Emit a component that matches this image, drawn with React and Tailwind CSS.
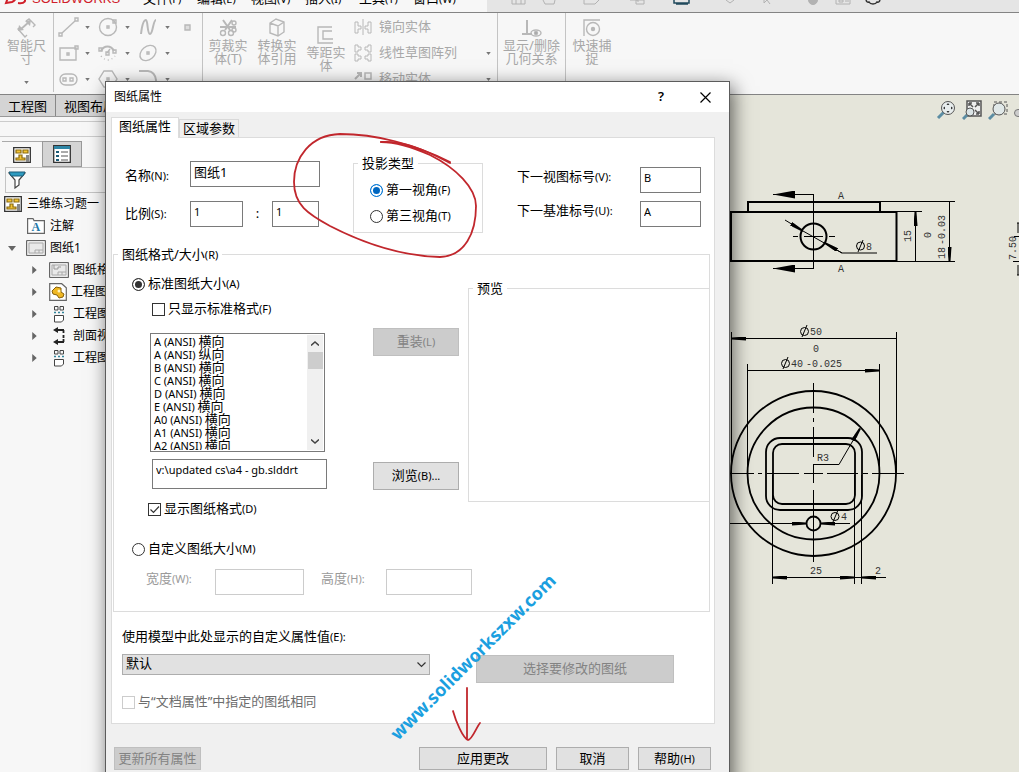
import React, { useState } from 'react';

const MENUS = [
  { text: '文件(F)' },
  { text: '编辑(E)' },
  { text: '视图(V)' },
  { text: '插入(I)' },
  { text: '工具(T)' },
  { text: '窗口(W)' },
];

const FORMATS = [
  'A (ANSI) 横向',
  'A (ANSI) 纵向',
  'B (ANSI) 横向',
  'C (ANSI) 横向',
  'D (ANSI) 横向',
  'E (ANSI) 横向',
  'A0 (ANSI) 横向',
  'A1 (ANSI) 横向',
  'A2 (ANSI) 横向',
];

// small helpers

function Key({ children }) {
  return <span className="text-[11px]">{children}</span>;
}

function Caret({ className = '' }) {
  return (
    <svg className={`h-[3px] w-[5px] shrink-0 ${className}`} viewBox="0 0 6 4">
      <path d="M0 0h6L3 4z" fill="#777" />
    </svg>
  );
}

function Radio({ label, hot, blue, ...props }) {
  return (
    <label className="flex items-center gap-[3px]">
      <input
        type="radio"
        className={`size-[13px] appearance-none rounded-full border bg-white checked:shadow-[inset_0_0_0_2px_white] ${
          blue
            ? 'border-[#333] checked:border-[#0078d7] checked:bg-[#0067c0]'
            : 'border-[#333] checked:bg-[#333]'
        }`}
        {...props}
      />
      <span>
        {label}
        <Key>{hot}</Key>
      </span>
    </label>
  );
}

function Checkbox({ label, hot, disabled, ...props }) {
  return (
    <label className={`flex items-center gap-[3px] ${disabled ? 'text-[#6d6d6d]' : ''}`}>
      <span className="relative flex">
        <input
          type="checkbox"
          disabled={disabled}
          className="peer size-[13px] appearance-none border border-[#333] bg-white disabled:border-[#ccc]"
          {...props}
        />
        <svg
          className="pointer-events-none absolute inset-0 hidden size-[13px] peer-checked:block"
          viewBox="0 0 13 13"
        >
          <path d="M2.5 6.5l3 3 5.500-6" fill="none" stroke="#333" strokeWidth="1.2" />
        </svg>
      </span>
      <span>
        {label}
        {hot && <Key>{hot}</Key>}
      </span>
    </label>
  );
}

function TextBox({ className = '', ...props }) {
  return (
    <input
      type="text"
      className={`border border-[#7a7a7a] bg-white px-[3px] pb-[6px] text-[11px] outline-none disabled:border-[#ccc] ${className}`}
      {...props}
    />
  );
}

function Button({ className = '', children, ...props }) {
  return (
    <button
      type="button"
      className={`border border-[#adadad] bg-[#e1e1e1] disabled:border-[#bfbfbf] disabled:bg-[#ccc] disabled:text-[#838383] ${className}`}
      {...props}
    >
      {children}
    </button>
  );
}

// top of the main window

function MenuBar() {
  return (
    <header className="flex h-[13px] overflow-hidden border-b border-[#848484] bg-[#e5e5e5]">
      <div className="flex h-3 w-[487px] items-end bg-[#f7f7f7] pb-[5px] leading-4">
        <svg className="mb-[2px] ml-1 h-4 w-7 shrink-0" viewBox="0 0 28 16">
          <path d="M2 14l4-11h4c4 0 3 8-2 10zM14 14c7 1 9-3 5-5s-2-5 4-4" fill="none" stroke="#d0202a" strokeWidth="2" />
        </svg>
        <span className="w-[111px] font-['Liberation_Sans'] text-[13px] text-[#d0202a]">SOLIDWORKS</span>
        <nav className="flex gap-[10px] whitespace-nowrap">
          {MENUS.map((m) => (
            <a key={m.text} href="#" className="w-11">
              {m.text.slice(0, 2)}
              <Key>{m.text.slice(2)}</Key>
            </a>
          ))}
        </nav>
      </div>
      <svg className="h-3 w-[400px]" viewBox="487 0 400 12" fill="none" stroke="#b2b2b2">
        <path d="M512 0v4h13V0M516 0v4M521 0v4M543 0l2 4h9l1-4M584 0v4h11l4-4M630 0h8v2M636 0h8v4h-8zM836 0v4h14V0M839 0h4v2h-4zM845 1h4" />
        <path d="M674 0v3h15V0M676 4h12" stroke="#20495c" strokeWidth="1.500" />
        <path d="M726 0l4 3 4-3M764 0v3l3-3 3 4" />
        <circle cx="813" cy="0" r="4.500" fill="#b2b2b2" />
        <path d="M866 0q1 3 3 2 1 2 4 2 3 0 4-2 2 1 3-2" stroke="#333" strokeWidth="1.500" />
      </svg>
    </header>
  );
}

function BigTool({ lines, className = '', children }) {
  return (
    <button type="button" disabled className={`flex flex-col items-center leading-[13px] ${className}`}>
      <svg className="mb-px size-5" viewBox="0 0 20 20" fill="none" stroke="#b8b8b8" strokeWidth="1.400">
        {children}
      </svg>
      {lines.map((l) => (
        <span key={l} className="whitespace-nowrap">{l}</span>
      ))}
      <Caret className="mt-auto" />
    </button>
  );
}

function SmallTool({ children, caret = true }) {
  return (
    <button type="button" disabled className="flex h-[26px] w-10 items-center gap-[5px]">
      <svg className="h-5 w-[22px]" viewBox="0 0 22 20" fill="none" stroke="#b8b8b8" strokeWidth="1.400">
        {children}
      </svg>
      {caret && <Caret />}
    </button>
  );
}

function RowTool({ label, caret, children }) {
  return (
    <button type="button" disabled className="flex h-[26px] items-center">
      <svg className="mr-[7px] h-[18px] w-[18px]" viewBox="0 0 18 18" fill="none" stroke="#b8b8b8">
        {children}
      </svg>
      {label}
      {caret && <Caret className="ml-auto" />}
    </button>
  );
}

function Ribbon() {
  return (
    <div className="flex h-[82px] items-start overflow-hidden border-b border-[#848484] bg-[#f7f7f7] text-[#a8a8a8]">
      <BigTool lines={['智能尺', '寸']} className="h-[79px] w-[53px] pt-[5px] pb-2">
        <path d="M9 3l3-2 6 6-2 2M2 10l-1 1 7 8 2-2" />
        <path d="M4 11l8-7" strokeWidth="1.800" />
        <path d="M1 13l1-6 5 5zM14 2l-1 6-5-5z" fill="#b8b8b8" stroke="none" />
      </BigTool>
      <div className="grid h-[79px] w-[149px] grid-cols-[40px_40px_40px_20px] border-l border-[#c4c4c4] pt-px pl-1">
        <SmallTool>
          <path d="M4 16L17 4" />
          <path d="M1 16h3v3H1zM17 1h3v3h-3z" />
        </SmallTool>
        <SmallTool>
          <circle cx="10" cy="10" r="8.500" />
          <path d="M9 9h2v2H9zM15 3h3v3h-3z" />
        </SmallTool>
        <SmallTool>
          <path d="M3 17C4 8 6 3 8 3s1 14 4 14 3-14 6-14" strokeWidth="2" />
        </SmallTool>
        <SmallTool caret={false}>
          <path d="M7 8h5v5H7z" fill="#ddd" />
        </SmallTool>
        <SmallTool>
          <path d="M2 5h16v12H2zM9 10h2v2H9zM17 3h3v3h-3z" />
        </SmallTool>
        <SmallTool>
          <path d="M3 8C6 2 13 2 16 8" strokeWidth="2" />
          <path d="M9 10l3-4M1 5h3v3H1zM15 7h3v3h-3zM8 9h3v3H8z" />
          <path d="M3 13q7 8 14 0" strokeDasharray="1 3" />
        </SmallTool>
        <SmallTool>
          <ellipse cx="10" cy="10" rx="9" ry="6.500" transform="rotate(-40 10 10)" />
          <path d="M9 9h2v2H9z" />
        </SmallTool>
        <span />
        <SmallTool>
          <rect x="2" y="5" width="17" height="11" rx="5.500" />
          <path d="M5 9h3v3H5zM12 9h3v3h-3z" />
        </SmallTool>
        <SmallTool>
          <path d="M6 2h8l5 8-5 8H6l-5-8zM9 9h2v2H9z" />
        </SmallTool>
        <SmallTool>
          <path d="M1 2h9q7 1 8 9v6" strokeWidth="2" />
        </SmallTool>
      </div>
      <div className="flex h-[79px] w-[295px] border-l border-[#c4c4c4] pl-px">
        <BigTool lines={['剪裁实', '体(T)']} className="w-[48px] pt-[5px]">
          <path d="M5 2l7 10M14 2L7 12M2 9h16" strokeWidth="2" />
          <circle cx="5" cy="15" r="2.500" />
          <circle cx="13" cy="15" r="2.500" />
          <circle cx="16" cy="5" r="2" />
          <circle cx="16" cy="12" r="2" />
        </BigTool>
        <BigTool lines={['转换实', '体引用']} className="w-[50px] pt-[5px]">
          <path d="M3 5l6-4 8 3v10l-6 4-8-3zM3 5l8 3 6-4M11 8v10" />
        </BigTool>
        <BigTool lines={['等距实', '体']} className="w-[48px] pt-3">
          <path d="M16 2H2v16h15M16 6H7v8h10" />
        </BigTool>
        <div className="flex flex-1 flex-col pt-px pr-[6px] pl-1">
          <RowTool label="镜向实体">
            <path d="M9 1v16M1 4h3v4h3v3H4v4H1zM17 4h-3v4h-3v3h3v4h3z" />
          </RowTool>
          <RowTool label="线性草图阵列" caret>
            <path d="M1 1h3v2h3v3H4v2H1zM17 1h-3v2h-3v3h3v2h3zM1 10h3v2h3v3H4v2H1zM17 10h-3v2h-3v3h3v2h3z" />
          </RowTool>
          <RowTool label="移动实体" caret>
            <path d="M1 9l6-6M3 3h4v4" strokeWidth="2" />
            <path d="M11 3h6v6h-6z" strokeWidth="1.500" />
          </RowTool>
        </div>
      </div>
      <BigTool lines={['显示/删除', '几何关系']} className="h-[71px] w-[68px] border-l border-[#c4c4c4] pt-[5px]">
        <path d="M5 2v14M0 16h10" strokeWidth="2" />
        <ellipse cx="14" cy="15" rx="5" ry="3" />
        <circle cx="14" cy="15" r="1.500" fill="#999" />
      </BigTool>
      <BigTool lines={['快速捕', '捉']} className="h-[71px] w-[53px] border-l border-[#c4c4c4] pt-[5px]">
        <path d="M2 18V2h16" />
        <circle cx="11" cy="11" r="6.500" />
        <circle cx="11" cy="11" r="1.500" fill="#b8b8b8" />
      </BigTool>
    </div>
  );
}

// feature tree icons

function SheetIcon({ view }) {
  return (
    <svg className="h-4 w-5 shrink-0" viewBox="0 0 20 16" fill="#e9e9e9" stroke="#666">
      <rect x=".5" y=".5" width="19" height="15" rx="1" strokeWidth="1.200" />
      <path d="M3 3h14v10H3zM9 13v-3h8M13 10v3" stroke="#aaa" />
      {view && <path d="M5 3v4h4V5h3" stroke="#999" fill="none" />}
    </svg>
  );
}

function DrawingIcon() {
  return (
    <svg className="h-4 w-[18px] shrink-0" viewBox="0 0 18 16">
      <path d="M.7.7h16.600v14.600H.7z" fill="#fff" stroke="#333" strokeWidth="1.300" />
      <path d="M3 3h5v3H3zM10 3h5v3h-5zM6 8h3v3h3v2H3v-2h3z" fill="#f4c534" stroke="#8a6a10" strokeWidth="1.200" />
      <path d="M13 8h3v7h-3z" fill="#888" />
    </svg>
  );
}

function PartIcon() {
  return (
    <svg className="h-[18px] w-[18px] shrink-0" viewBox="0 0 18 18">
      <path d="M.7.7h12l4.600 4v12.600H.7z" fill="#fff" stroke="#666" strokeWidth="1.200" />
      <path d="M3 8l4-4 5 1v4l3 2-1 3-4 1-2-3-4-1z" fill="#efb722" stroke="#86600a" />
      <circle cx="10" cy="8" r="1.500" fill="#fff3b8" />
    </svg>
  );
}

function ViewIcon() {
  return (
    <svg className="mx-1 h-[18px] w-3 shrink-0" viewBox="0 0 12 18" fill="none" stroke="#444">
      <path d="M1.500 5V1.500h3.500V5zM7 1.500h3.500V5H7z" />
      <path d="M1 7.500h10" stroke="#31859c" strokeWidth="1.600" strokeDasharray="2 2" />
      <path d="M1.500 10.500v6.500h7l2-2v-4.500z" fill="#fff" />
    </svg>
  );
}

function SectionIcon() {
  return (
    <svg className="mx-1 h-[18px] w-3 shrink-0" viewBox="0 0 12 18">
      <path d="M11 3H4M4 15h7M10.500 3v3M10.500 8v3M10.500 12v3" fill="none" stroke="#222" strokeWidth="1.800" />
      <path d="M0 3l5-3v6zM0 15l5-3v6z" fill="#222" />
    </svg>
  );
}

function TreeRow({ icon, text, expandable }) {
  return (
    <li className="flex h-[22px] items-center pl-8">
      <svg className="mr-3 h-2 w-[5px]" viewBox="0 0 5 9">
        {expandable && <path d="M0 0l5 4.500L0 9z" fill="#666" />}
      </svg>
      {icon}
      <span className="ml-1">{text}</span>
    </li>
  );
}

function Sidebar() {
  return (
    <aside className="w-60 shrink-0 bg-[#f7f7f7] text-xs whitespace-nowrap">
      <div className="flex h-[22px] border-b border-[#999] bg-[#d4d4d4] text-[13px] leading-[20px]">
        <button type="button" className="w-14 border-r border-[#888]">工程图</button>
        <button type="button" className="px-2">视图布局</button>
      </div>
      <div className="mt-1 h-4 border-y border-[#ccc]" />
      <div className="mt-1 ml-[2px] flex h-[26px]">
        <button type="button" aria-label="特征树" className="flex w-10 items-center justify-center border-t border-[#aaa]">
          <DrawingIcon />
        </button>
        <button
          type="button"
          aria-label="属性"
          className="flex w-10 items-center justify-center border border-[#999] bg-[#d4d4d4]"
        >
          <svg className="h-[18px] w-[18px]" viewBox="0 0 18 18">
            <path d="M.7.7h16.600v16.600H.7z" fill="#fff" stroke="#333" strokeWidth="1.300" />
            <path d="M1 1h16v3H1z" fill="#2e86a6" />
            <path d="M3 6h3v2H3zM3 10h3v2H3zM3 14h3v2H3z" fill="#1c5c78" />
            <path d="M8 7h7M8 11h7M8 15h7" stroke="#555" />
          </svg>
        </button>
      </div>
      <div className="ml-[5px] flex h-[26px] items-center border border-[#c4c4c4] pl-[2px]">
        <svg className="h-[18px] w-[18px]" viewBox="0 0 18 18">
          <path d="M1 2h16l-6 7v5l-4 3V9z" fill="#fff" stroke="#444" strokeWidth="1.200" />
          <path d="M1 1h16l-2 4H3z" fill="#2e9bc0" stroke="#1c5c78" />
        </svg>
      </div>
      <ul>
        <li className="flex h-[22px] items-center gap-[5px] pl-1">
          <DrawingIcon />
          三维练习题一
        </li>
        <li className="flex h-[22px] items-center gap-[5px] pl-[27px]">
          <svg className="h-4 w-[18px]" viewBox="0 0 18 16">
            <path d="M.6 2.500V.6H6l1 2h10.400v12.800H.6z" fill="#fff" stroke="#666" strokeWidth="1.200" />
            <text x="4.500" y="13" fontSize="12" fontWeight="bold" fontFamily="Liberation Serif" fill="#2478a8">A</text>
          </svg>
          注解
        </li>
        <li className="flex h-[22px] items-center pl-2">
          <svg className="mr-[10px] h-[5px] w-2" viewBox="0 0 8 5">
            <path d="M0 0h8L4 5z" fill="#666" />
          </svg>
          <SheetIcon />
          <span className="ml-1">图纸1</span>
        </li>
        <TreeRow expandable icon={<SheetIcon view />} text="图纸格式1" />
        <TreeRow expandable icon={<PartIcon />} text="工程图视图1" />
        <TreeRow expandable icon={<ViewIcon />} text="工程图视图2" />
        <TreeRow expandable icon={<SectionIcon />} text="剖面视图 A-A" />
        <TreeRow expandable icon={<ViewIcon />} text="工程图视图3" />
      </ul>
    </aside>
  );
}

// drawing sheet

function Magnifier({ children }) {
  return (
    <svg className="size-5" viewBox="0 0 20 20" fill="none" stroke="#555">
      {children}
    </svg>
  );
}

function Canvas() {
  return (
    <main className="relative flex-1 overflow-hidden bg-[#e5e5da]">
      <svg className="h-[677px] w-[779px]" viewBox="240 95 779 677" fill="none" stroke="#000">
        <defs>
          <marker id="tip" viewBox="0 0 14 4" refX="14" refY="2" markerWidth="14" markerHeight="4" markerUnits="userSpaceOnUse" orient="auto-start-reverse">
            <path d="M0 0l14 1v2L0 4z" fill="#000" stroke="none" />
          </marker>
          <marker id="cut" viewBox="0 0 22 8" refX="22" refY="4" markerWidth="22" markerHeight="8" markerUnits="userSpaceOnUse" orient="auto">
            <path d="M0 0l22 4-22 4z" fill="#000" stroke="none" />
          </marker>
        </defs>

        {/* front view */}
        <g strokeWidth="2">
          <path d="M731 212h165.500v49H731zM748 212v-10h132v10" />
          <circle cx="813.500" cy="236.500" r="13" />
        </g>
        <path d="M813.500 194.500H773" markerEnd="url(#cut)" />
        <path d="M813.500 268.500H773" markerEnd="url(#cut)" />
        <path d="M813.500 194v75M793 236.500h5M804 236.500h19M829 236.500h6" />
        <path d="M785 220l18 11" markerEnd="url(#tip)" />
        <path d="M803 231l39 22h35" />
        <path d="M842 253l-17-10" markerEnd="url(#tip)" />
        <path d="M880 201.500h75M896 211.500h26M896 261.500h59" />
        <path d="M915.500 212v49M949.500 202v59" markerStart="url(#tip)" markerEnd="url(#tip)" />

        {/* top view */}
        <g strokeWidth="1.800">
          <circle cx="813.500" cy="473.500" r="82.500" />
          <circle cx="813.500" cy="473.500" r="66" />
          <rect x="766" y="438" width="96" height="72" rx="14" />
          <rect x="773" y="444" width="82" height="60" rx="9" />
          <circle cx="813.500" cy="523.500" r="7" />
        </g>
        <path d="M813.500 383v30M813.500 418v4M813.500 427v30M813.500 464v19M813.500 490v72" />
        <path d="M730 473.500h24M758 473.500h4M767 473.500h32M804 473.500h19M827 473.500h31M863 473.500h5M872 473.500h32" />
        <path d="M732 338.500h164M748 370.500h131" markerStart="url(#tip)" markerEnd="url(#tip)" />
        <path d="M731.500 332v141M896.500 332v141M747.500 364v110M879.500 364v110" />
        <path d="M814 464.500h25l21-36" markerEnd="url(#tip)" />
        <path d="M730 523.500h76" markerEnd="url(#tip)" />
        <path d="M850 523.500h-29" markerEnd="url(#tip)" />
        <path d="M772.500 475v109M854.500 475v109M861.500 475v109" />
        <path d="M773 577.500h81" markerStart="url(#tip)" markerEnd="url(#tip)" />
        <path d="M854 577.500h8" />
        <path d="M886 577.500h-24" markerEnd="url(#tip)" />

        {/* diameter signs */}
        <circle cx="860.500" cy="246" r="4" />
        <path d="M858 252l5-12" />
        <circle cx="804.500" cy="331.500" r="4" />
        <path d="M802 337l5-12" />
        <circle cx="785.500" cy="363.500" r="4" />
        <path d="M783 369l5-12" />
        <circle cx="835" cy="516.500" r="4" />
        <path d="M833 522l5-12" />

        <g fill="#333" stroke="none" fontFamily="Liberation Mono" fontSize="10">
          <text x="838" y="199">A</text>
          <text x="838" y="272">A</text>
          <text x="866" y="250">8</text>
          <text x="810" y="335">50</text>
          <text x="813" y="352">0</text>
          <text x="791" y="367">40</text>
          <text x="806" y="367">-0.025</text>
          <text x="817" y="461">R3</text>
          <text x="841" y="520">4</text>
          <text x="810" y="574">25</text>
          <text x="875" y="574">2</text>
          <text transform="translate(911 242) rotate(-90)">15</text>
          <text transform="translate(931 238) rotate(-90)">0</text>
          <text transform="translate(945 259) rotate(-90)">18</text>
          <text transform="translate(945 245) rotate(-90)">-0.03</text>
          <text transform="translate(1016 260) rotate(-90)">7.50</text>
        </g>
        <path d="M1017 223h3M1014 236.500h5M1013 261.500h6M1017 275h3M1018 223v10M1018 265v10" />
      </svg>
      <div className="absolute top-[5px] right-[11px] flex gap-[6px]">
        <Magnifier>
          <path d="M2 18l7-7" stroke="#5c8da3" strokeWidth="3" />
          <circle cx="12" cy="8" r="6.500" fill="#e8eded" />
          <path d="M12 3l1.500 2h-3zM12 13l1.500-2h-3zM7 8l2-1.500v3zM17 8l-2-1.500v3z" fill="#333" stroke="none" />
        </Magnifier>
        <Magnifier>
          <path d="M5 1h14v15H5z" fill="#eee" strokeWidth="1.500" />
          <path d="M7 3l4 4M17 3l-4 4M17 14l-4-4M7 3h3M7 3v3M17 3h-3M17 3v3M17 14v-3M17 14h-3" strokeWidth="1.500" />
          <path d="M1 19l5-5" stroke="#5c8da3" strokeWidth="3" />
          <circle cx="8" cy="12" r="4" fill="#dbe4e6" />
        </Magnifier>
        <Magnifier>
          <path d="M6 2h13v12H6z" strokeDasharray="3 2" />
          <path d="M1 19l5-5" stroke="#5c8da3" strokeWidth="3" />
          <circle cx="11" cy="9" r="6" fill="#e0e8e8" />
        </Magnifier>
      </div>
      <span className="absolute top-[14px] -right-1 h-2 w-[9px] rounded-full border border-[#777] bg-[#ccc]" />
    </main>
  );
}

// the dialog

function FormatList() {
  const [selected, setSelected] = useState(null);

  return (
    <div className="mt-[5px] flex h-[119px] w-[175px] border border-[#7a7a7a] p-px">
      <ul role="listbox" aria-label="标准图纸大小" className="flex-1 overflow-hidden pl-[2px] leading-[13px]">
        {FORMATS.map((f) => (
          <li
            key={f}
            role="option"
            aria-selected={selected === f}
            onClick={() => setSelected(f)}
            className={`h-[13px] ${selected === f ? 'bg-[#0078d7] text-white' : ''}`}
          >
            <Key>{f.slice(0, -2)}</Key>
            {f.slice(-2)}
          </li>
        ))}
      </ul>
      <div className="flex w-4 flex-col items-center bg-[#f0f0f0]">
        <button type="button" aria-label="向上" className="flex h-[17px] items-center">
          <svg className="h-[5px] w-2" viewBox="0 0 8 5"><path d="M0 4.500L4 1l4 3.500" fill="none" stroke="#444" strokeWidth="1.500" /></svg>
        </button>
        <div className="h-[17px] w-[15px] bg-[#cdcdcd]" />
        <button type="button" aria-label="向下" className="mt-auto flex h-[17px] items-center">
          <svg className="h-[5px] w-2" viewBox="0 0 8 5"><path d="M0 .5L4 4l4-3.500" fill="none" stroke="#444" strokeWidth="1.500" /></svg>
        </button>
      </div>
    </div>
  );
}

function SheetDialog() {
  const [projection, setProjection] = useState('first');
  const [size, setSize] = useState('standard');

  return (
    <div
      role="dialog"
      aria-label="图纸属性"
      className="absolute top-[81px] left-[105px] w-[625px] border border-[#5c5c5c] bg-[#f0f0f0] whitespace-nowrap shadow-[3px_5px_18px_rgba(0,0,0,0.6)]"
    >
      <div className="flex h-[30px] items-center bg-white pr-[18px] pl-2 text-xs">
        <h1>图纸属性</h1>
        <button type="button" aria-label="帮助" className="ml-auto text-[13px] font-semibold">?</button>
        <button type="button" aria-label="关闭" className="ml-9">
          <svg className="size-[11px]" viewBox="0 0 11 11"><path d="M.5.5l10 10M10.500.5l-10 10" stroke="#000" strokeWidth="1.200" /></svg>
        </button>
      </div>

      <div role="tablist" className="ml-[5px] flex h-[25px] items-end">
        <button type="button" role="tab" aria-selected="true" className="relative -mb-px flex h-[21px] w-[68px] items-start justify-center border border-b-0 border-[#dcdcdc] bg-white leading-[16px]">
          图纸属性
        </button>
        <button type="button" role="tab" aria-selected="false" className="flex h-[18px] w-[60px] items-start justify-center border border-b-0 border-[#d9d9d9] leading-[16px]">
          区域参数
        </button>
      </div>

      <div className="mr-[14px] ml-[5px] border border-[#dcdcdc] bg-white pt-4 pb-3">
        <div className="flex items-start">
          <div className="flex w-[241px] flex-col gap-[14px] pt-[7px] pl-[13px]">
            <div className="flex h-[26px] items-center">
              <label htmlFor="name" className="w-[65px] pt-1">名称<Key>(N):</Key></label>
              <TextBox id="name" defaultValue="图纸1" className="h-[26px] w-[130px] text-[13px]" />
            </div>
            <div className="flex h-[26px] items-center">
              <label htmlFor="scale" className="w-[65px]">比例<Key>(S):</Key></label>
              <TextBox id="scale" defaultValue="1" className="h-[26px] w-[53px]" />
              <span className="w-[29px] text-center">:</span>
              <TextBox aria-label="比例分母" defaultValue="1" className="h-[26px] w-[47px]" />
            </div>
          </div>

          <fieldset className="h-[79px] w-[130px] border border-[#dcdcdc] pl-4">
            <legend className="-ml-3 h-[18px] px-1 leading-[18px]">投影类型</legend>
            <div className="flex flex-col pt-[5px] *:h-[26px]">
              <Radio
                blue
                name="projection"
                label="第一视角"
                hot="(F)"
                checked={projection === 'first'}
                onChange={() => setProjection('first')}
              />
              <Radio
                blue
                name="projection"
                label="第三视角"
                hot="(T)"
                checked={projection === 'third'}
                onChange={() => setProjection('third')}
              />
            </div>
          </fieldset>

          <div className="ml-[34px] flex flex-col gap-2 pt-[13px]">
            <div className="flex">
              <label htmlFor="nextView" className="w-[123px]">下一视图标号<Key>(V):</Key></label>
              <TextBox id="nextView" defaultValue="B" className="h-[26px] w-[61px]" />
            </div>
            <div className="flex">
              <label htmlFor="nextDatum" className="w-[123px]">下一基准标号<Key>(U):</Key></label>
              <TextBox id="nextDatum" defaultValue="A" className="h-[26px] w-[61px]" />
            </div>
          </div>
        </div>

        <fieldset className="mt-3 mr-1 ml-px border border-[#dcdcdc] pb-4">
          <legend className="ml-1 h-[18px] px-1 leading-[18px]">图纸格式/大小<Key>(R)</Key></legend>
          <div className="flex items-start">
            <div className="w-[354px] pt-3">
              <div className="flex h-[18px] items-center pl-[18px]">
                <Radio
                  name="size"
                  label="标准图纸大小"
                  hot="(A)"
                  checked={size === 'standard'}
                  onChange={() => setSize('standard')}
                />
              </div>
              <div className="mt-[7px] flex h-[18px] items-center pl-[38px]">
                <Checkbox label="只显示标准格式" hot="(F)" />
              </div>
              <div className="mt-[10px] flex items-start pl-9">
                <FormatList />
                <Button disabled className="ml-12 h-7 w-[86px]">重装<Key>(L)</Key></Button>
              </div>
              <div className="mt-[7px] flex items-start pl-[38px]">
                <TextBox
                  aria-label="图纸格式文件"
                  defaultValue="v:\updated cs\a4 - gb.slddrt"
                  className="h-[30px] w-[175px] pb-[10px]"
                />
                <Button className="mt-[3px] ml-[46px] h-7 w-[86px]">浏览<Key>(B)...</Key></Button>
              </div>
            </div>
            <fieldset className="mt-4 h-[223px] flex-1 border border-r-0 border-[#dcdcdc]">
              <legend className="ml-1 h-[18px] px-1 leading-[18px]">预览</legend>
            </fieldset>
          </div>
          <div className="-mt-[2px] flex h-[18px] items-center pl-[34px]">
            <Checkbox label="显示图纸格式" hot="(D)" defaultChecked />
          </div>
          <div className="mt-[22px] flex h-[18px] items-center pl-[18px]">
            <Radio
              name="size"
              label="自定义图纸大小"
              hot="(M)"
              checked={size === 'custom'}
              onChange={() => setSize('custom')}
            />
          </div>
          <div className="mt-[11px] flex pl-8 text-[#9a9a9a]">
            <label htmlFor="paperWidth" className="w-[69px]">宽度<Key>(W):</Key></label>
            <TextBox id="paperWidth" disabled={size !== 'custom'} className="h-[26px] w-[89px]" />
            <label htmlFor="paperHeight" className="ml-[17px] w-[65px]">高度<Key>(H):</Key></label>
            <TextBox id="paperHeight" disabled={size !== 'custom'} className="h-[26px] w-[86px]" />
          </div>
        </fieldset>

        <div className="mt-[15px] pl-[10px]">
          <label htmlFor="model" className="block h-[18px] leading-[18px]">
            使用模型中此处显示的自定义属性值<Key>(E):</Key>
          </label>
          <div className="mt-[9px] flex items-start">
            <div className="relative">
              <select id="model" className="block h-[21px] w-[308px] appearance-none border border-[#adadad] bg-[#e1e1e1] px-[3px] pb-[2px] leading-[17px]">
                <option>默认</option>
              </select>
              <svg className="pointer-events-none absolute top-2 right-1 h-[6px] w-[9px]" viewBox="0 0 9 6">
                <path d="M.5.5l4 4 4-4" fill="none" stroke="#333" strokeWidth="1.200" />
              </svg>
            </div>
            <Button disabled className="mt-px ml-[46px] h-7 w-[198px]">选择要修改的图纸</Button>
          </div>
          <div className="mt-[10px] flex h-[18px] items-center">
            <Checkbox disabled label="与“文档属性”中指定的图纸相同" />
          </div>
        </div>
      </div>

      <div className="mt-[23px] flex gap-[9px] pr-[18px] pb-5 pl-2 leading-[19px]">
        <Button disabled className="mr-auto h-[23px] w-[87px]">更新所有属性</Button>
        <Button className="h-[23px] w-32">应用更改</Button>
        <Button className="h-[23px] w-[73px]">取消</Button>
        <Button className="h-[23px] w-[73px]">帮助<Key>(H)</Key></Button>
      </div>

      {/* hand-drawn marks and site name on top of the form */}
      <svg className="pointer-events-none absolute -top-px -left-px h-[691px] w-[625px]" viewBox="105 81 625 691" fill="none" stroke="#c1272d" strokeWidth="1.800" strokeLinecap="round">
        <path d="M450 162C415 144 375 134 340 134C310 135 294 158 294 182C294 205 308 214 330 226C365 244 400 256 440 257C465 256 476 233 476 206C476 188 456 168 430 155C410 146 395 142 381 142" />
        <path d="M381 142C405 141 425 150 450 163" />
        <path d="M467 688v51M453 711C456 722 463 738 468 740C472 740 476 728 480 723" />
        <text
          transform="translate(398 741) rotate(-45)"
          fill="#1b9fe0"
          stroke="none"
          fontFamily="Noto Sans"
          fontWeight="bold"
          fontSize="18"
        >
          www.solidworkszxw.com
        </text>
      </svg>
    </div>
  );
}

function App() {
  return (
    <div className="relative flex h-screen flex-col overflow-hidden bg-[#f7f7f7] font-['Noto_Sans','Noto_Sans_CJK_SC',sans-serif] text-[13px] text-black">
      <MenuBar />
      <Ribbon />
      <div className="flex min-h-0 flex-1">
        <Sidebar />
        <Canvas />
      </div>
      <SheetDialog />
    </div>
  );
}

export default App;
